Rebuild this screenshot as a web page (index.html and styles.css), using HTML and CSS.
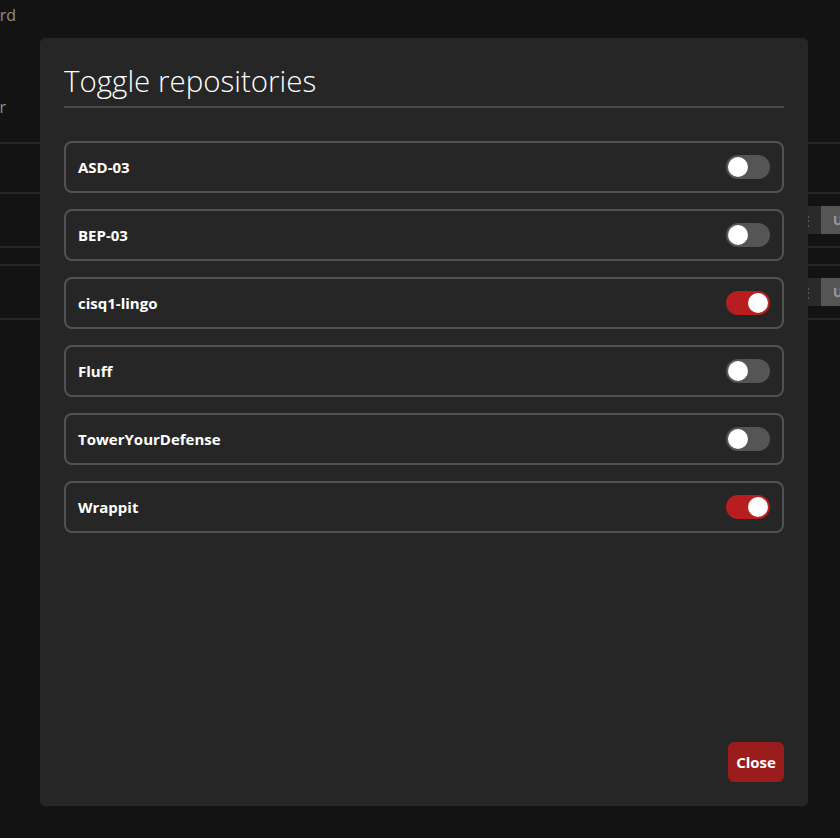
FILE: index.html
```html
<!DOCTYPE html>
<html lang="en">
<head>
<meta charset="utf-8">
<title>Toggle repositories</title>
<link rel="stylesheet" href="styles.css">
</head>
<body>
<div class="page">
  <div class="page-title">Dashboard</div>
  <div class="page-sub">Filter</div>
  <div class="table">
    <div class="table-head"></div>
    <div class="table-row">
      <div class="row-actions"><span class="kebab">⋮</span><span class="btn-u">Update</span></div>
    </div>
    <div class="table-spacer"></div>
    <div class="table-row boxed">
      <div class="row-actions"><span class="kebab">⋮</span><span class="btn-u">Update</span></div>
    </div>
  </div>
</div>

<div class="modal">
  <h2 class="modal-title">Toggle repositories</h2>
  <ul class="repo-list">
    <li class="repo"><span class="repo-name">ASD-03</span><span class="switch"></span></li>
    <li class="repo"><span class="repo-name">BEP-03</span><span class="switch"></span></li>
    <li class="repo"><span class="repo-name">cisq1-lingo</span><span class="switch on"></span></li>
    <li class="repo"><span class="repo-name">Fluff</span><span class="switch"></span></li>
    <li class="repo"><span class="repo-name">TowerYourDefense</span><span class="switch"></span></li>
    <li class="repo"><span class="repo-name">Wrappit</span><span class="switch on"></span></li>
  </ul>
  <div class="modal-footer">
    <button class="btn-close">Close</button>
  </div>
</div>
</body>
</html>
```

FILE: styles.css
```css
html, body {
  margin: 0;
  padding: 0;
  height: 100%;
  overflow: hidden;
  background: #131313;
  font-family: "Open Sans", "Noto Sans", sans-serif;
}

.page {
  display: flex;
  flex-direction: column;
  padding-top: 2px;
}

.page-title {
  width: 120px;
  margin-left: -104px;
  text-align: right;
  font-size: 16px;
  line-height: 26px;
  color: #8f8f8f;
}

.page-sub {
  width: 120px;
  margin-left: -114px;
  margin-top: 66px;
  text-align: right;
  font-size: 16px;
  line-height: 26px;
  color: #8f8f8f;
}

.table {
  margin-top: 22px;
  display: flex;
  flex-direction: column;
}

.table-head {
  height: 48px;
  border-top: 2px solid #262626;
  border-bottom: 2px solid #262626;
}

.table-row {
  height: 52px;
  border-bottom: 2px solid #262626;
  display: flex;
  align-items: center;
}

.table-row.boxed {
  border-top: 2px solid #262626;
}

.table-spacer {
  height: 16px;
}

.row-actions {
  margin-left: 795px;
  display: flex;
  height: 28px;
  flex-shrink: 0;
}

.kebab {
  width: 26px;
  background: #2a2a2a;
  color: #666;
  font-size: 14px;
  display: flex;
  align-items: center;
  justify-content: center;
}

.btn-u {
  background: #555;
  color: #9a9a9a;
  font-weight: 700;
  font-size: 13px;
  padding: 0 12px;
  display: flex;
  align-items: center;
}

/* Modal */
.modal {
  position: fixed;
  left: 40px;
  top: 38px;
  width: 768px;
  height: 768px;
  box-sizing: border-box;
  padding: 23px 24px 24px;
  background: #262626;
  border-radius: 5px;
  display: flex;
  flex-direction: column;
}

.modal-title {
  margin: 0;
  font-family: "Open Sans", "Noto Sans", sans-serif;
  font-weight: 300;
  font-size: 29.5px;
  line-height: 40px;
  color: #ffffff;
  padding-bottom: 5px;
  border-bottom: 2px solid #484848;
}

.repo-list {
  list-style: none;
  margin: 33px 0 0;
  padding: 0;
  display: flex;
  flex-direction: column;
  gap: 16px;
}

.repo {
  height: 52px;
  box-sizing: border-box;
  border: 2px solid #525252;
  border-radius: 8px;
  padding: 0 12px;
  display: flex;
  align-items: center;
  justify-content: space-between;
}

.repo-name {
  font-weight: 700;
  font-size: 15px;
  color: #ffffff;
}

.switch {
  position: relative;
  width: 44px;
  height: 24px;
  border-radius: 12px;
  background: #555555;
  flex-shrink: 0;
}

.switch::after {
  content: "";
  position: absolute;
  top: 2px;
  left: 2px;
  width: 20px;
  height: 20px;
  border-radius: 50%;
  background: #ffffff;
}

.switch.on {
  background: #b81d1f;
}

.switch.on::after {
  left: 22px;
}

.modal-footer {
  margin-top: auto;
  display: flex;
  justify-content: flex-end;
}

.btn-close {
  width: 56px;
  height: 40px;
  border: none;
  border-radius: 6px;
  background: #9b1c1c;
  color: #ffffff;
  font-family: "Open Sans", "Noto Sans", sans-serif;
  font-weight: 700;
  font-size: 15px;
  padding: 0;
}
```
